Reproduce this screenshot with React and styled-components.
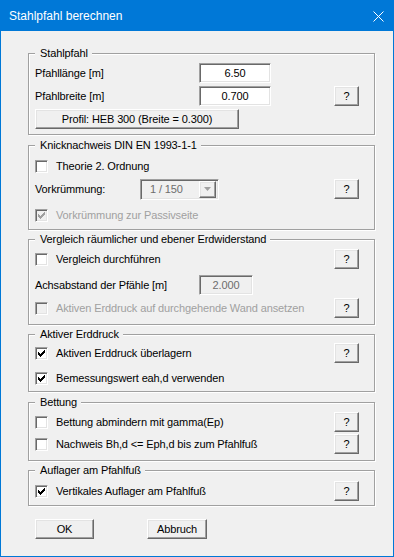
import React from 'react';
import styled, { createGlobalStyle } from 'styled-components';

const GlobalStyle = createGlobalStyle`
  body {
    margin: 0;
    background: #f0f0f0;
    font-family: "Liberation Sans", Arial, sans-serif;
    font-size: 11px;
    letter-spacing: -0.12px;
  }
`;

const Window = styled.div`
  box-sizing: border-box;
  width: 394px;
  height: 557px;
  border: 1px solid #0078d7;
  background: #f0f0f0;
  display: flex;
  flex-direction: column;
`;

const TitleBar = styled.div`
  height: 30px;
  flex: none;
  background: #0078d7;
  color: #fff;
  display: flex;
  align-items: center;
  justify-content: space-between;
  padding-left: 8px;
`;

const TitleText = styled.span`
  font-size: 12px;
  letter-spacing: 0;
`;

const CloseBox = styled.div`
  width: 30px;
  height: 30px;
  display: flex;
  align-items: center;
  justify-content: center;
`;

const Body = styled.div`
  padding: 16px 18px 0 27px;
  display: flex;
  flex-direction: column;
`;

const Group = styled.fieldset`
  margin: ${p => p.$mt || 0}px 0 0;
  padding: ${p => p.$pt}px 15px ${p => p.$pb}px 6px;
  border: 1px solid #a0a0a0;
  box-shadow: inset 1px 1px 0 #fff, 1px 1px 0 #fff;
  min-width: 0;
`;

const Legend = styled.legend`
  padding: 0 4px 0 5px;
  margin: 0;
  line-height: 13px;
  background: #f0f0f0;
  color: #000;
`;

const Row = styled.div`
  display: flex;
  align-items: center;
  height: 20px;
  margin-top: ${p => p.$mt || 0}px;
`;

const Label = styled.span`
  flex: none;
  width: ${p => (p.$w ? `${p.$w}px` : 'auto')};
  line-height: 13px;
  color: ${p => (p.$disabled ? '#a0a0a0' : '#000')};
  white-space: nowrap;
`;

const CheckLabel = styled.label`
  display: flex;
  align-items: center;
  gap: 8px;
  line-height: 13px;
  white-space: nowrap;
  color: ${p => (p.$disabled ? '#a0a0a0' : '#000')};
`;

const Box = styled.span`
  box-sizing: border-box;
  flex: none;
  width: 13px;
  height: 13px;
  border: 1px solid;
  border-color: #a0a0a0 #fff #fff #a0a0a0;
  box-shadow: inset 1px 1px 0 #696969, inset -1px -1px 0 #e3e3e3;
  background: ${p => (p.$disabled ? '#f0f0f0' : '#fff')};
  position: relative;
  svg {
    position: absolute;
    left: -1px;
    top: -1px;
  }
`;

const Field = styled.div`
  box-sizing: border-box;
  width: ${p => p.$w}px;
  height: 20px;
  border: 1px solid;
  border-color: #a0a0a0 #fff #fff #a0a0a0;
  box-shadow: inset 1px 1px 0 #696969, inset -1px -1px 0 #e3e3e3;
  background: ${p => (p.$disabled ? '#f0f0f0' : '#fff')};
  color: ${p => (p.$disabled ? '#6d6d6d' : '#000')};
  display: flex;
  align-items: center;
  justify-content: center;
  line-height: 13px;
`;

const Select = styled.div`
  box-sizing: border-box;
  width: 79px;
  height: 21px;
  border: 1px solid;
  border-color: #a0a0a0 #fff #fff #a0a0a0;
  box-shadow: inset 1px 1px 0 #696969, inset -1px -1px 0 #e3e3e3;
  background: #f0f0f0;
  color: #6d6d6d;
  display: flex;
  align-items: center;
  padding: 2px 2px 2px 0;
`;

const SelectValue = styled.span`
  flex: 1;
  padding-left: 9px;
  line-height: 13px;
`;

const ArrowButton = styled.span`
  box-sizing: border-box;
  width: 17px;
  height: 17px;
  border: 1px solid;
  border-color: #fff #696969 #696969 #fff;
  box-shadow: inset -1px -1px 0 #a0a0a0, inset 1px 1px 0 #e3e3e3;
  display: flex;
  align-items: center;
  justify-content: center;
`;

const Button = styled.button`
  box-sizing: border-box;
  flex: none;
  width: ${p => p.$w}px;
  height: 20px;
  margin-left: ${p => (p.$right ? 'auto' : `${p.$ml || 0}px`)};
  padding: 0;
  border: 1px solid;
  border-color: #fff #696969 #696969 #fff;
  box-shadow: inset -1px -1px 0 #a0a0a0, inset 1px 1px 0 #e3e3e3;
  background: #f0f0f0;
  font-family: inherit;
  font-size: 11px;
  letter-spacing: inherit;
  line-height: 13px;
  color: #000;
`;

const Footer = styled.div`
  display: flex;
  margin-top: 13px;
  padding-left: 7px;
`;

const Check = ({ on, disabled }) => (
  <Box $disabled={disabled}>
    {on && (
      <svg width="13" height="13" viewBox="0 0 13 13" shapeRendering="crispEdges">
        <path
          fill={disabled ? '#a0a0a0' : '#000'}
          d="M3 5h1v3h-1z M4 6h1v3h-1z M5 7h1v3h-1z M6 6h1v3h-1z M7 5h1v3h-1z M8 4h1v3h-1z M9 3h1v3h-1z"
        />
      </svg>
    )}
  </Box>
);

const CheckRow = ({ label, on, disabled, help, mt }) => (
  <Row $mt={mt}>
    <CheckLabel $disabled={disabled}>
      <Check on={on} disabled={disabled} />
      {label}
    </CheckLabel>
    {help && <Button $w={25} $right>?</Button>}
  </Row>
);

function App() {
  return (
    <>
      <GlobalStyle />
      <Window>
        <TitleBar>
          <TitleText>Stahlpfahl berechnen</TitleText>
          <CloseBox>
            <svg width="11" height="11" viewBox="0 0 11 11">
              <path d="M0.5 0.5L10.5 10.5M10.5 0.5L0.5 10.5" stroke="#fff" strokeWidth="1" />
            </svg>
          </CloseBox>
        </TitleBar>
        <Body>
          <Group $pt={3} $pb={5}>
            <Legend>Stahlpfahl</Legend>
            <Row>
              <Label $w={164}>Pfahllänge [m]</Label>
              <Field $w={72}>6.50</Field>
            </Row>
            <Row $mt={3}>
              <Label $w={164}>Pfahlbreite [m]</Label>
              <Field $w={72}>0.700</Field>
              <Button $w={25} $right>?</Button>
            </Row>
            <Row $mt={3}>
              <Button $w={204}>Profil: HEB 300 (Breite = 0.300)</Button>
            </Row>
          </Group>

          <Group $mt={4} $pt={4} $pb={4}>
            <Legend>Knicknachweis DIN EN 1993-1-1</Legend>
            <CheckRow label="Theorie 2. Ordnung" />
            <Row $mt={3}>
              <Label $w={105}>Vorkrümmung:</Label>
              <Select>
                <SelectValue>1 / 150</SelectValue>
                <ArrowButton>
                  <svg width="7" height="4" viewBox="0 0 7 4">
                    <path d="M0 0h7L3.5 4z" fill="#a0a0a0" />
                  </svg>
                </ArrowButton>
              </Select>
              <Button $w={25} $right>?</Button>
            </Row>
            <CheckRow mt={6} label="Vorkrümmung zur Passivseite" on disabled />
          </Group>

          <Group $mt={3} $pt={3} $pb={6}>
            <Legend>Vergleich räumlicher und ebener Erdwiderstand</Legend>
            <CheckRow label="Vergleich durchführen" help />
            <Row $mt={6}>
              <Label $w={164}>Achsabstand der Pfähle [m]</Label>
              <Field $w={54} $disabled>2.000</Field>
            </Row>
            <CheckRow mt={3} label="Aktiven Erddruck auf durchgehende Wand ansetzen" disabled help />
          </Group>

          <Group $mt={3} $pt={2} $pb={3}>
            <Legend>Aktiver Erddruck</Legend>
            <CheckRow label="Aktiven Erddruck überlagern" on help />
            <CheckRow mt={5} label="Bemessungswert eah,d verwenden" on />
          </Group>

          <Group $mt={4} $pt={3} $pb={6}>
            <Legend>Bettung</Legend>
            <CheckRow label="Bettung abmindern mit gamma(Ep)" help />
            <CheckRow mt={2} label="Nachweis Bh,d <= Eph,d bis zum Pfahlfuß" help />
          </Group>

          <Group $mt={3} $pt={4} $pb={4}>
            <Legend>Auflager am Pfahlfuß</Legend>
            <CheckRow label="Vertikales Auflager am Pfahlfuß" on help />
          </Group>

          <Footer>
            <Button $w={59}>OK</Button>
            <Button $w={60} $ml={53}>Abbruch</Button>
          </Footer>
        </Body>
      </Window>
    </>
  );
}

export default App;
